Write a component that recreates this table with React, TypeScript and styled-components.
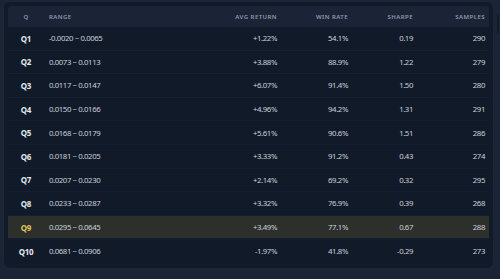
import React from 'react';
import styled, { createGlobalStyle } from 'styled-components';

const GlobalStyle = createGlobalStyle`
  html, body {
    margin: 0;
    padding: 0;
    background: #1a2435;
    overflow: hidden;
  }
  body {
    font-family: 'Noto Sans', 'Open Sans', sans-serif;
  }
`;

const Page = styled.div`
  display: flex;
  align-items: flex-start;
  gap: 3px;
  width: 500px;
  height: 279px;
  padding: 1px 0 0 3px;
  box-sizing: border-box;
`;

const Card = styled.div`
  width: 491px;
  box-sizing: border-box;
  padding: 4px 4px 5px 4px;
  background: #111a29;
  border: 1px solid #1c2638;
  border-radius: 7px;
`;

const Scroll = styled.div`
  width: 2px;
  height: 18px;
  margin-top: 14px;
  background: #121a28;
  border-radius: 1px;
`;

const Row = styled.div<{ $head?: boolean; $active?: boolean; $last?: boolean }>`
  display: grid;
  grid-template-columns: 36px 140px 98px 71px 65px 72px;
  align-items: center;
  height: ${({ $head }) => ($head ? '21px' : '23.6px')};
  background: ${({ $head, $active }) => ($head ? '#1b2436' : $active ? '#2d2f2b' : 'transparent')};
  border-bottom: ${({ $head, $last }) => ($head || $last ? 'none' : '1px solid #172032')};
  box-sizing: border-box;
  border-radius: ${({ $head }) => ($head ? '3px 3px 0 0' : '0')};
`;

const HeadCell = styled.div<{ $align?: string }>`
  padding: 0 5px;
  font-size: 6px;
  font-weight: 600;
  letter-spacing: 0.45px;
  text-transform: uppercase;
  color: #8d99ab;
  text-align: ${({ $align }) => $align || 'right'};
`;

const QCell = styled.div<{ $active?: boolean }>`
  text-align: center;
  font-size: 8px;
  font-weight: 700;
  letter-spacing: -0.3px;
  color: ${({ $active }) => ($active ? '#e3c45e' : '#e4e8ee')};
`;

const Cell = styled.div<{ $align?: string }>`
  padding: 0 5px;
  font-size: 7.8px;
  letter-spacing: -0.4px;
  color: #c8cfd9;
  text-align: ${({ $align }) => $align || 'right'};
  white-space: nowrap;
`;

type Bucket = {
  q: string;
  range: string;
  ret: string;
  win: string;
  sharpe: string;
  samples: number;
};

const rows: Bucket[] = [
  { q: 'Q1', range: '-0.0020 ~ 0.0065', ret: '+1.22%', win: '54.1%', sharpe: '0.19', samples: 290 },
  { q: 'Q2', range: '0.0073 ~ 0.0113', ret: '+3.88%', win: '88.9%', sharpe: '1.22', samples: 279 },
  { q: 'Q3', range: '0.0117 ~ 0.0147', ret: '+6.07%', win: '91.4%', sharpe: '1.50', samples: 280 },
  { q: 'Q4', range: '0.0150 ~ 0.0166', ret: '+4.96%', win: '94.2%', sharpe: '1.31', samples: 291 },
  { q: 'Q5', range: '0.0168 ~ 0.0179', ret: '+5.61%', win: '90.6%', sharpe: '1.51', samples: 286 },
  { q: 'Q6', range: '0.0181 ~ 0.0205', ret: '+3.33%', win: '91.2%', sharpe: '0.43', samples: 274 },
  { q: 'Q7', range: '0.0207 ~ 0.0230', ret: '+2.14%', win: '69.2%', sharpe: '0.32', samples: 295 },
  { q: 'Q8', range: '0.0233 ~ 0.0287', ret: '+3.32%', win: '76.9%', sharpe: '0.39', samples: 268 },
  { q: 'Q9', range: '0.0295 ~ 0.0645', ret: '+3.49%', win: '77.1%', sharpe: '0.67', samples: 288 },
  { q: 'Q10', range: '0.0681 ~ 0.0906', ret: '-1.97%', win: '41.8%', sharpe: '-0.29', samples: 273 },
];

const App: React.FC = () => (
  <>
    <GlobalStyle />
    <Page>
      <Card>
        <Row $head>
          <HeadCell $align="center">Q</HeadCell>
          <HeadCell $align="left">Range</HeadCell>
          <HeadCell>Avg Return</HeadCell>
          <HeadCell>Win Rate</HeadCell>
          <HeadCell>Sharpe</HeadCell>
          <HeadCell>Samples</HeadCell>
        </Row>
        {rows.map((r, i) => {
          const active = r.q === 'Q9';
          return (
            <Row key={r.q} $active={active} $last={i === rows.length - 1}>
              <QCell $active={active}>{r.q}</QCell>
              <Cell $align="left">{r.range}</Cell>
              <Cell>{r.ret}</Cell>
              <Cell>{r.win}</Cell>
              <Cell>{r.sharpe}</Cell>
              <Cell>{r.samples}</Cell>
            </Row>
          );
        })}
      </Card>
      <Scroll />
    </Page>
  </>
);

export default App;
